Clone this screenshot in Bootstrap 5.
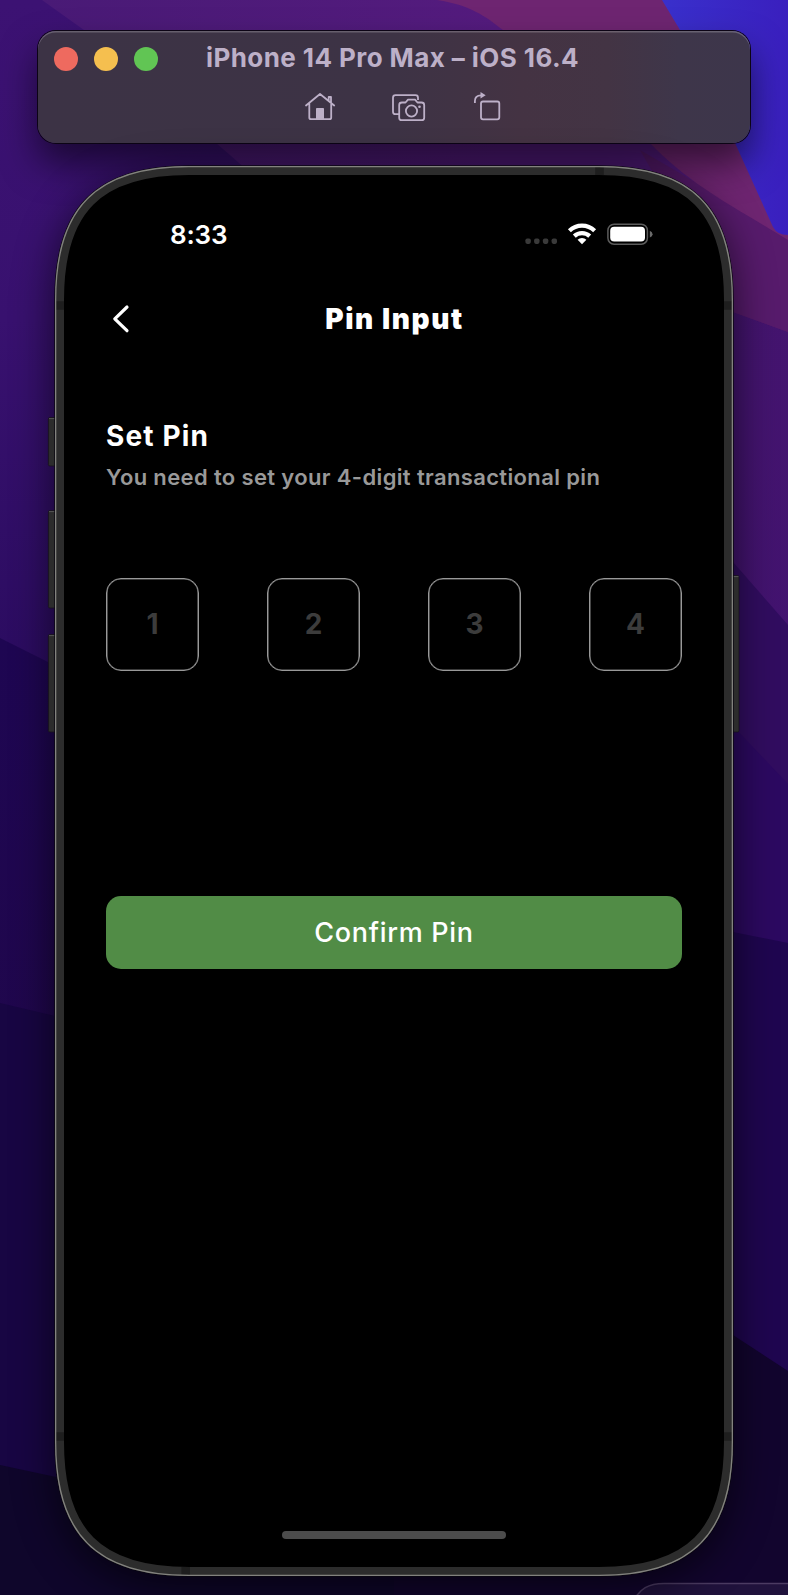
<!DOCTYPE html>
<html lang="en">
<head>
<meta charset="utf-8">
<meta name="viewport" content="width=device-width, initial-scale=1">
<title>iPhone 14 Pro Max – iOS 16.4</title>
<link href="https://cdn.jsdelivr.net/npm/bootstrap@5.3.0/dist/css/bootstrap.min.css" rel="stylesheet">
<style>
  body { width: 788px; height: 1595px; font-family: Inter, "Liberation Sans", sans-serif; background: #16053c; line-height: 1; }
  svg { display: block; flex: none; }
  .desktop { width: 788px; height: 1595px; padding-top: 31px; }
  .wallpaper { top: 0; left: 0; z-index: 0; }
  .sim-window { width: 712px; height: 112px; margin-left: 38px; border-radius: 18px; z-index: 1;
    background: linear-gradient(90deg, #3c3345 0%, #3d3345 50%, #443343 68%, #433444 80%, #3e364a 90%, #3d364b 100%);
    box-shadow: inset 0 1.5px 0 rgba(255,255,255,.22), 0 0 0 1px #0c0415, 0 20px 36px rgba(0,0,0,.55); }
  .title-row { height: 55px; padding-left: 16px; }
  .light { width: 24px; height: 24px; border-radius: 50%; }
  .light-red { background: #ee6a5f; } .light-yellow { background: #f5bf4f; } .light-green { background: #61c554; }
  .sim-title { font-size: 26px; font-weight: 700; letter-spacing: .42px; color: #bdb0c8; margin-left: 48px; padding-bottom: 2px; }
  .tool-row { padding: 1px 0 0 263.5px; color: #bdb0c8; }
  .tool-camera { margin-left: 50px; }
  .tool-rotate { margin-left: 43px; }
  .phone { width: 678px; height: 1410px; margin: 23px 0 0 55px; z-index: 1; }
  .phone-frame { top: 0; left: -10px; z-index: -1; overflow: visible; }
  .status-bar { height: 44px; padding: 0 79px 0 115px; margin-top: 47px; }
  .status-icons { margin-bottom: 4px; }
  .clock { font-size: 26px; font-weight: 600; letter-spacing: -.2px; }
  .app-bar { height: 40px; margin: 42px 51px 0; }
  .app-title { font-size: 28px; font-weight: 900; letter-spacing: 1.6px; padding-top: 2px; }
  .bar-spacer { width: 29px; }
  .content { padding: 0 51px; }
  .headline { font-size: 28px; font-weight: 650; letter-spacing: 1.15px; margin: 80px 0 0; line-height: 34px; }
  .hint { font-size: 22px; font-weight: 600; letter-spacing: .36px; color: #999; margin: 11px 0 0; line-height: 26px; white-space: nowrap; }
  .pin-row { margin-top: 88px; }
  .pin-box { width: 93px; height: 93px; border: 1px solid #999; box-shadow: inset 0 0 0 .6px #777; border-radius: 15px; background: #000; font-size: 28px; font-weight: 700; color: #3c3c3c; padding-bottom: 2px; }
  .btn-confirm { height: 73px; margin-top: 224.5px; border: 0; border-radius: 15px; font-size: 27px; font-weight: 500; letter-spacing: .7px; padding-top: 8px; --bs-btn-color: #fff; --bs-btn-bg: #518c46; --bs-btn-hover-bg: #487d3e; --bs-btn-hover-color: #fff; }
  .home-bar { width: 224px; height: 8px; border-radius: 4px; background: #4c4c4c; margin-bottom: 37px; }
</style>
</head>
<body>
<div class="desktop position-relative overflow-hidden">
  <svg class="wallpaper position-absolute" width="788" height="1595" viewBox="0 0 788 1595" aria-hidden="true">
    <defs>
      <linearGradient id="left" x1="0" y1="0" x2="0" y2="1"><stop offset="0" stop-color="#3c1273"/><stop offset=".2" stop-color="#38116f"/><stop offset=".45" stop-color="#290b5e"/><stop offset="1" stop-color="#240858"/></linearGradient>
      <linearGradient id="top" gradientUnits="userSpaceOnUse" x1="42" y1="0" x2="500" y2="0"><stop offset="0" stop-color="#491a76"/><stop offset="1" stop-color="#541b7e"/></linearGradient>
      <linearGradient id="violet" x1="0" y1="0" x2="0" y2="1"><stop offset="0" stop-color="#45156f"/><stop offset="1" stop-color="#411270"/></linearGradient>
      <linearGradient id="blue" x1="0" y1="0" x2="1" y2="0"><stop offset="0" stop-color="#3930cc"/><stop offset="1" stop-color="#3a1fbe"/></linearGradient>
      <linearGradient id="low" x1="0" y1="0" x2="0" y2="1"><stop offset="0" stop-color="#1e0652"/><stop offset="1" stop-color="#20074c"/></linearGradient>
    </defs>
    <rect width="400" height="1595" fill="url(#left)"/>
    <path d="M0 638 48 662 400 800V1100H0Z" fill="url(#low)"/>
    <path d="M0 1003 55 1016 400 1100V1595H0Z" fill="#180643"/>
    <path d="M0 1465 56 1477 500 1580V1595H0Z" fill="#0f062b"/>
    <rect x="394" y="170" width="394" height="800" fill="url(#violet)"/>
    <path d="M394 170H788V332L733 312Z" fill="#571b6c"/>
    <path d="M42 0 84 30 230 155 394 300 733 285 788 290V0Z" fill="url(#top)"/>
    <path d="M640 150 733 204 788 238V332L733 312Z" fill="#571b6c"/>
    <path d="M437 0C470 5 485 16 503 30 570 80 620 110 650 143 690 185 733 206 788 240V0Z" fill="#6e2571"/>
    <path d="M662 0 680 30 735 143 773 227Q777 235 788 235V0Z" fill="url(#blue)"/>
    <path d="M733 562 788 625V1000H700V540Z" fill="#310d60"/>
    <path d="M733 726 788 784V1000H700Z" fill="#2c0961"/>
    <path d="M700 925 733 932 788 943V1400H700Z" fill="#1f0650"/>
    <path d="M394 1320 733 1335 788 1371V1595H394Z" fill="#12052e"/>
    <path d="M634 1600C640 1589 648 1583.5 664 1583.5H800V1600Z" fill="#20123c" stroke="#4b3b62" stroke-width="1.6"/>
  </svg>

  <header class="sim-window position-relative">
    <div class="title-row d-flex align-items-center">
      <div class="d-flex gap-3">
        <span class="light light-red"></span><span class="light light-yellow"></span><span class="light light-green"></span>
      </div>
      <div class="sim-title">iPhone 14 Pro Max – iOS 16.4</div>
    </div>
    <div class="tool-row d-flex">
      <svg width="36" height="36" viewBox="302 87 36 36" fill="none" stroke="currentColor" stroke-width="1.8" stroke-linecap="round" stroke-linejoin="round"><path d="M306 105.500 320 94 334.200 105.500M309.300 103V117.500Q309.300 119.200 311 119.200H329.500Q331.200 119.200 331.200 117.500V103M328.700 100.500V97H331V102"/><path d="M316.500 119V108.500H323.500V119Z" fill="currentColor" stroke-width="1"/></svg>
      <svg class="tool-camera" width="40" height="36" viewBox="388 87 40 36" fill="none" stroke="currentColor" stroke-width="1.8" stroke-linejoin="round"><path d="M399 114.200H395.500Q393 114.200 393 111.700V97.700Q393 95.200 395.500 95.200H415.500Q418 95.200 418 97.700V100"/><path d="M402 102.500H405.500L408 99.700H415L417.500 102.500H421.500Q424.200 102.500 424.200 105V117.700Q424.200 120.200 421.700 120.200H401.700Q399.200 120.200 399.200 117.700V105Q399.200 102.500 402 102.500Z"/><circle cx="411.500" cy="111" r="5.600"/><circle cx="419.500" cy="106.700" r="1.300" fill="currentColor" stroke="none"/></svg>
      <svg class="tool-rotate" width="32" height="36" viewBox="471 87 32 36" fill="none" stroke="currentColor" stroke-width="1.8"><rect x="481" y="101.500" width="18.300" height="17.800" rx="2"/><path d="M474.900 103V101Q474.900 95.300 481 95.300"/><path d="M480.500 92V98.600L485.700 95.300Z" fill="currentColor" stroke="none"/></svg>
    </div>
  </header>

  <main class="phone position-relative d-flex flex-column text-white">
    <svg class="phone-frame position-absolute" width="698" height="1410" viewBox="-10 0 698 1410" aria-hidden="true">
      <defs>
        <path id="body-shape" d="M134 0H544C637 0 678 41 678 134V1276C678 1369 637 1410 544 1410H134C41 1410 0 1369 0 1276V134C0 41 41 0 134 0Z"/>
        <clipPath id="body-clip"><use href="#body-shape"/></clipPath>
        <filter id="soft" x="-20%" y="-10%" width="140%" height="120%"><feGaussianBlur stdDeviation="22"/></filter>
      </defs>
      <use href="#body-shape" y="10" fill="#000" opacity=".66" filter="url(#soft)"/>
      <g fill="#2c2c2c" stroke="#17131c" stroke-width=".8">
        <rect x="-6.600" y="251.500" width="9" height="48.500" rx="1.500"/><rect x="-6.600" y="344.500" width="9" height="97.500" rx="1.500"/><rect x="-6.600" y="468.500" width="9" height="97.500" rx="1.500"/><rect x="675" y="409.500" width="9" height="156.500" rx="1.500"/>
      </g>
      <path d="M-6 252.600H0M-6 345.600H0M-6 469.600H0M678 410.600H683.500" stroke="#555"/>
      <use href="#body-shape" fill="#000" stroke="#0a0710" stroke-width="1.500"/>
      <g clip-path="url(#body-clip)" fill="none">
        <use href="#body-shape" stroke="#2c2c2c" stroke-width="18"/>
        <path d="M0 139.500H9M669 139.500H678M0 1270.500H9M669 1270.500H678M544.500 0V9M130.700 1401V1410" stroke="#1e1e1e" stroke-width="8.600"/>
        <use href="#body-shape" stroke="#82827e" stroke-width="2.600"/>
      </g>
    </svg>

    <div class="status-bar d-flex align-items-center">
      <div class="clock">8:33</div>
      <svg class="status-icons ms-auto" width="130" height="30" viewBox="524 218 130 30" aria-hidden="true">
        <g fill="#3a3a3a"><rect x="525.400" y="238.500" width="5.400" height="5.400" rx="1.800"/><rect x="534.100" y="238.500" width="5.400" height="5.400" rx="1.800"/><rect x="542.900" y="238.500" width="5.400" height="5.400" rx="1.800"/><rect x="551.600" y="238.500" width="5.400" height="5.400" rx="1.800"/></g>
        <g fill="none" stroke="#fff" stroke-width="4.200"><path d="M569.400 230.800A18 18 0 0 1 594.600 230.800"/><path d="M574.300 236.100A11.200 11.200 0 0 1 589.700 236.100"/></g>
        <path d="M582 244.200 577.600 239.700A6.300 6.300 0 0 1 586.400 239.700Z" fill="#fff"/>
        <rect x="607.900" y="224.200" width="39.500" height="20" rx="6.200" fill="none" stroke="#5c5c5c" stroke-width="1.500"/>
        <rect x="610.200" y="226.800" width="34.800" height="14.800" rx="4" fill="#fff"/>
        <path d="M649.800 230.800Q652.600 232 652.600 234.200 652.600 236.400 649.800 237.600Z" fill="#6a6a6a"/>
      </svg>
    </div>

    <nav class="app-bar d-flex align-items-center justify-content-between">
      <svg width="30" height="32" viewBox="106.5 303 30 32" fill="none" stroke="#fff" stroke-width="3.2" stroke-linecap="round" stroke-linejoin="round" role="img" aria-label="Back"><path d="M127.500 307 115.300 318.800 127.500 330.700"/></svg>
      <h1 class="app-title mb-0">Pin Input</h1>
      <span class="bar-spacer"></span>
    </nav>

    <section class="content d-flex flex-column">
      <h2 class="headline">Set Pin</h2>
      <p class="hint">You need to set your 4-digit transactional pin</p>
      <div class="pin-row d-flex justify-content-between">
        <div class="pin-box d-flex align-items-center justify-content-center">1</div>
        <div class="pin-box d-flex align-items-center justify-content-center">2</div>
        <div class="pin-box d-flex align-items-center justify-content-center">3</div>
        <div class="pin-box d-flex align-items-center justify-content-center">4</div>
      </div>
      <button type="button" class="btn btn-confirm w-100">Confirm Pin</button>
    </section>

    <div class="home-bar mt-auto mx-auto"></div>
  </main>
</div>
<script src="https://cdn.jsdelivr.net/npm/bootstrap@5.3.0/dist/js/bootstrap.bundle.min.js"></script>
</body>
</html>
